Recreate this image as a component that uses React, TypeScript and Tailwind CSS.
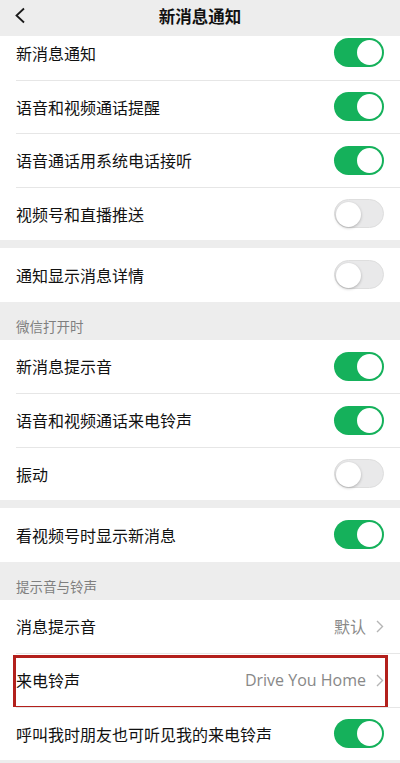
import { ReactNode } from 'react';

const font = { fontFamily: '"Noto Sans CJK SC", "Noto Sans", sans-serif' };

const Toggle = ({ on }: { on: boolean }) => (
  <div
    className={`relative w-[50px] h-[29px] rounded-full ${
      on ? 'bg-[#15b15b]' : 'bg-[#e9e9ea] border border-[#dedede]'
    }`}
  >
    <div
      className={`absolute top-[2px] w-[25px] h-[25px] rounded-full bg-white ${
        on ? 'right-[2px]' : 'left-[1px] top-[1px] shadow-[0_1px_3px_rgba(0,0,0,0.25)]'
      }`}
    />
  </div>
);

const Chevron = () => (
  <svg width="8" height="13" viewBox="0 0 8 13" className="ml-[10px]">
    <path d="M1 1l5.5 5.5L1 12" fill="none" stroke="#b5b5b5" strokeWidth="1.4" />
  </svg>
);

const Row = ({
  label,
  right,
  first,
  children,
}: {
  label: string;
  right: ReactNode;
  first?: boolean;
  children?: ReactNode;
}) => (
  <div className="relative bg-white pl-4">
    <div
      className={`h-[53.5px] flex items-center justify-between pr-4 ${
        first ? '' : 'border-t border-[#e6e6e6]'
      }`}
    >
      <span className="text-[16px] text-[#111]">{label}</span>
      <div className="flex items-center">{right}</div>
    </div>
    {children}
  </div>
);

const SectionTitle = ({ text }: { text: string }) => (
  <div className="h-[38px] flex items-end px-4 pb-[3px] text-[13.5px] text-[#7f7f7f]">{text}</div>
);

export default function App() {
  return (
    <div className="w-[400px] h-[763px] overflow-hidden bg-[#ededed]" style={font}>
      {/* 顶部导航 */}
      <div className="relative z-10 h-9 flex items-center justify-center bg-[#ededed]">
        <svg width="12" height="17" viewBox="0 0 12 17" className="absolute left-[14px] top-[7px]">
          <path d="M10 1.5L2.5 8.5 10 15.5" fill="none" stroke="#1a1a1a" strokeWidth="1.8" />
        </svg>
        <span className="text-[16.5px] font-semibold text-[#111] -mt-[3px]">新消息通知</span>
      </div>

      <div className="-mt-[10px]">
        <Row first label="新消息通知" right={<Toggle on />} />
        <Row label="语音和视频通话提醒" right={<Toggle on />} />
        <Row label="语音通话用系统电话接听" right={<Toggle on />} />
        <Row label="视频号和直播推送" right={<Toggle on={false} />} />

        <div className="h-[8px]" />
        <Row first label="通知显示消息详情" right={<Toggle on={false} />} />

        <SectionTitle text="微信打开时" />
        <Row first label="新消息提示音" right={<Toggle on />} />
        <Row label="语音和视频通话来电铃声" right={<Toggle on />} />
        <Row label="振动" right={<Toggle on={false} />} />

        <div className="h-[8px]" />
        <Row first label="看视频号时显示新消息" right={<Toggle on />} />

        <SectionTitle text="提示音与铃声" />
        <Row
          first
          label="消息提示音"
          right={
            <>
              <span className="text-[16px] text-[#888]">默认</span>
              <Chevron />
            </>
          }
        />
        <Row
          label="来电铃声"
          right={
            <>
              <span className="text-[16px] text-[#888]" style={{ fontFamily: '"Open Sans", "Noto Sans", sans-serif' }}>
                Drive You Home
              </span>
              <Chevron />
            </>
          }
        >
          <div className="absolute left-[13px] right-[12px] top-[2px] -bottom-[2px] border-[3px] border-[#b3201c] pointer-events-none" />
        </Row>
        <Row label="呼叫我时朋友也可听见我的来电铃声" right={<Toggle on />} />
      </div>
    </div>
  );
}
